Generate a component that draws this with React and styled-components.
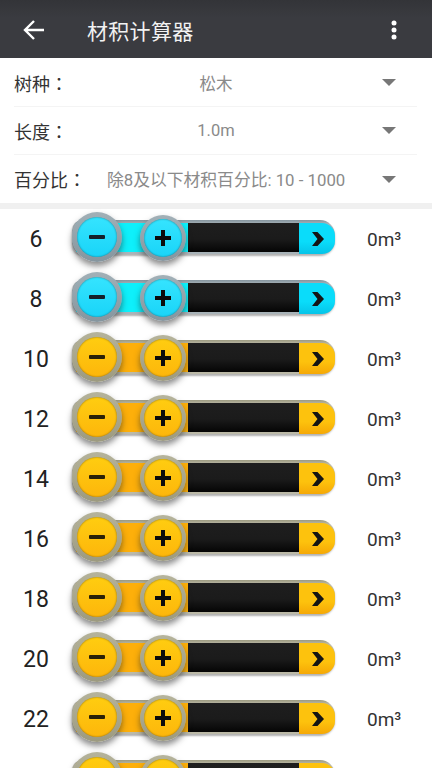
import React from 'react'
import styled, { createGlobalStyle, css } from 'styled-components'

const GlobalStyle = createGlobalStyle`
  html, body {
    margin: 0;
    padding: 0;
    height: 768px;
    overflow: hidden;
    background: #fff;
    font-family: Roboto, "Noto Sans CJK SC", sans-serif;
  }
`

const themes = {
  blue: {
    face: '#19d4f8',
    faceLight: '#35e4ff',
    fill: '#0ef0fb',
    cap: '#0adcfa',
    capDark: '#05c4e8',
    ring: '#85959e',
    ringLight: '#a2b0b7',
    edge: '#a9b4b9',
    minus: '#15202a',
  },
  yellow: {
    face: '#fdb60b',
    faceLight: '#ffcd10',
    fill: '#fdaf0a',
    cap: '#fdc20d',
    capDark: '#f5a805',
    ring: '#9c9a80',
    ringLight: '#b5b39b',
    edge: '#bcbaa8',
    minus: '#2a2108',
  },
}

const Page = styled.div`
  width: 432px;
  height: 768px;
  overflow: hidden;
`

const AppBar = styled.header`
  height: 58px;
  box-sizing: border-box;
  display: flex;
  align-items: center;
  padding: 2px 35px 0 22px;
  background: linear-gradient(#333438, #3a3b40 30%);
  color: #fff;
`

const Title = styled.h1`
  flex: 1;
  margin: 0 0 0 41px;
  font-size: 21px;
  font-weight: 400;
  letter-spacing: 0.3px;
  color: #f2f2f2;
`

const Form = styled.section`
  height: 151px;
  box-sizing: border-box;
  padding: 1px 15px 0 14px;
  border-bottom: 6px solid #f0f0f0;
`

const FormRow = styled.div`
  height: 48px;
  box-sizing: border-box;
  display: grid;
  grid-template-columns: 92px 220px 1fr;
  align-items: center;
  border-bottom: ${(p) => (p.$last ? 'none' : '1px solid #f4f4f4')};
`

const FormLabel = styled.span`
  font-size: 18px;
  color: #333;
  white-space: nowrap;
`

/* the TC cut centres the full-width colon in its cell */
const Colon = styled.span`
  font-family: "Noto Sans CJK TC", sans-serif;
`

const FormValue = styled.span`
  font-size: 16.5px;
  color: #8a8a8a;
  text-align: center;
  white-space: nowrap;
  ${(p) =>
    p.$long &&
    css`
      justify-self: start;
      margin-left: 1px;
      font-size: 16.8px;
    `}
`

const Caret = styled.span`
  justify-self: end;
  margin-right: 21px;
  width: 0;
  height: 0;
  border-left: 7px solid transparent;
  border-right: 7px solid transparent;
  border-top: 7px solid #777;
`

const List = styled.section`
  display: flex;
  flex-direction: column;
`

const Row = styled.div`
  height: 60px;
  flex: none;
  display: grid;
  grid-template-columns: 72px 263px 1fr;
  align-items: center;
`

const Size = styled.span`
  font-size: 23px;
  color: #222;
  text-align: center;
`

const Volume = styled.span`
  font-size: 19px;
  color: #333;
  padding-left: 32px;
  white-space: nowrap;
`

const Slider = styled.div`
  position: relative;
  height: 60px;
  display: flex;
  align-items: center;
`

const Track = styled.div`
  width: 100%;
  height: 34px;
  margin-top: -4px;
  box-sizing: border-box;
  display: flex;
  padding: 3px 0 2px 0;
  border-radius: 10px 15px 15px 10px;
  background: linear-gradient(${(p) => p.$t.ring}, ${(p) => p.$t.edge} 12%);
  box-shadow: 0 2px 2px rgba(60, 60, 60, 0.4);
`

const Fill = styled.div`
  width: 112px;
  margin-left: 4px;
  background: ${(p) => p.$t.fill};
`

const Dark = styled.div`
  flex: 1;
  background: linear-gradient(#1e1e1e, #1b1b1b 55%, #050505);
`

const Cap = styled.div`
  width: 36px;
  margin-bottom: -2px;
  display: flex;
  align-items: center;
  justify-content: center;
  padding-left: 1px;
  box-sizing: border-box;
  border-radius: 0 13px 13px 0;
  background: linear-gradient(${(p) => p.$t.cap}, ${(p) => p.$t.cap} 60%, ${(p) => p.$t.capDark});
`

const Knob = styled.div`
  position: absolute;
  box-sizing: border-box;
  display: flex;
  align-items: center;
  justify-content: center;
  border-radius: 50%;
  background: linear-gradient(${(p) => p.$t.ringLight}, ${(p) => p.$t.ring});
  box-shadow: 0 4px 6px rgba(40, 40, 40, 0.55);
  ${(p) =>
    p.$minus
      ? css`
          left: 0;
          top: 3px;
          width: 50px;
          height: 50px;
          padding: 5px;
        `
      : css`
          left: 68px;
          top: 6px;
          width: 46px;
          height: 46px;
          padding: 4px;
        `}
`

const KnobFace = styled.div`
  width: 100%;
  height: 100%;
  display: flex;
  align-items: center;
  justify-content: center;
  border-radius: 50%;
  background: linear-gradient(${(p) => p.$t.faceLight}, ${(p) => p.$t.face});
  box-shadow: inset 0 0 2px rgba(0, 0, 0, 0.45);
`

const BackIcon = () => (
  <svg width="24" height="24" viewBox="0 0 24 24" fill="none" stroke="#fff" strokeWidth="2.4">
    <path d="M22 12H3M12 3l-9 9 9 9" />
  </svg>
)

const MoreIcon = () => (
  <svg width="6" height="20" viewBox="0 0 6 20" fill="#fff">
    <circle cx="3" cy="3" r="2.5" />
    <circle cx="3" cy="10" r="2.5" />
    <circle cx="3" cy="17" r="2.5" />
  </svg>
)

const MinusIcon = ({ color }) => (
  <svg width="16" height="16" viewBox="0 0 16 16">
    <rect x="0" y="6" width="16" height="4" rx="1" fill={color} />
  </svg>
)

const PlusIcon = () => (
  <svg width="16" height="16" viewBox="0 0 16 16" fill="#0c0c0c">
    <rect x="0" y="6" width="16" height="4" />
    <rect x="6" y="0" width="4" height="16" />
  </svg>
)

const ArrowIcon = () => (
  <svg width="12" height="14" viewBox="0 0 12 14" fill="#141414">
    <path d="M0 0h5.500L12 7l-6.500 7H0l5.500-7z" />
  </svg>
)

// the last row only peeks in at the bottom of the screen, its texts are below the fold
const sizes = [6, 8, 10, 12, 14, 16, 18, 20, 22, null]

const SizeRow = ({ size }) => {
  const t = size !== null && size <= 8 ? themes.blue : themes.yellow
  return (
    <Row>
      <Size>{size}</Size>
      <Slider>
        <Track $t={t}>
          <Fill $t={t} />
          <Dark />
          <Cap $t={t}>
            <ArrowIcon />
          </Cap>
        </Track>
        <Knob $t={t} $minus>
          <KnobFace $t={t}>
            <MinusIcon color={t.minus} />
          </KnobFace>
        </Knob>
        <Knob $t={t}>
          <KnobFace $t={t}>
            <PlusIcon />
          </KnobFace>
        </Knob>
      </Slider>
      {size !== null && <Volume>0m³</Volume>}
    </Row>
  )
}

export default function App() {
  return (
    <Page>
      <GlobalStyle />
      <AppBar>
        <BackIcon />
        <Title>材积计算器</Title>
        <MoreIcon />
      </AppBar>
      <Form>
        <FormRow>
          <FormLabel>
            树种<Colon>：</Colon>
          </FormLabel>
          <FormValue>松木</FormValue>
          <Caret />
        </FormRow>
        <FormRow>
          <FormLabel>
            长度<Colon>：</Colon>
          </FormLabel>
          <FormValue>1.0m</FormValue>
          <Caret />
        </FormRow>
        <FormRow $last>
          <FormLabel>
            百分比<Colon>：</Colon>
          </FormLabel>
          <FormValue $long>除8及以下材积百分比: 10 - 1000</FormValue>
          <Caret />
        </FormRow>
      </Form>
      <List>
        {sizes.map((s, i) => (
          <SizeRow key={i} size={s} />
        ))}
      </List>
    </Page>
  )
}
